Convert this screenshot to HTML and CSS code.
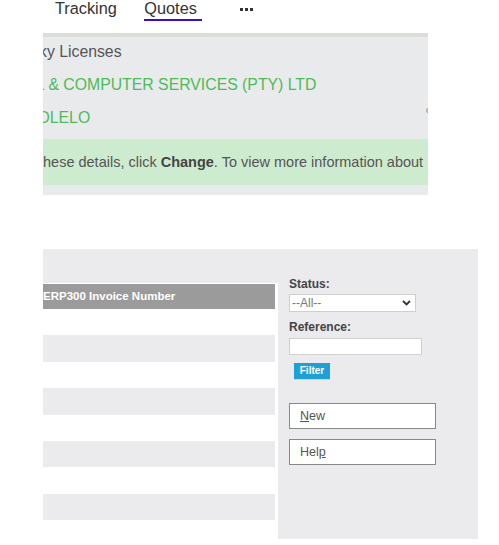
FILE: index.html
```html
<!DOCTYPE html>
<html lang="en">
<head>
<meta charset="utf-8">
<title>Quotes</title>
<link rel="stylesheet" href="styles.css">
</head>
<body>
<nav class="tabs">
  <a class="tab" href="#">Tracking</a>
  <a class="tab tab-active" href="#">Quotes</a>
  <span class="tab-more" aria-label="More"><i></i><i></i><i></i></span>
</nav>

<section class="account">
  <div class="acc-line acc-name"><span class="shift-k">ky Licenses</span></div>
  <div class="acc-line acc-green"><span class="shift-l">L &amp; COMPUTER SERVICES (PTY) LTD</span></div>
  <div class="acc-line acc-green acc-last">
    <span class="shift-o">OLELO</span>
    <span class="acc-edge">co</span>
  </div>
  <div class="acc-note">hese details, click <b>Change</b>. To view more information about</div>
</section>

<section class="orders">
  <div class="orders-list">
    <div class="list-head">ERP300 Invoice Number</div>
    <div class="list-row"></div>
    <div class="list-row alt"></div>
    <div class="list-row"></div>
    <div class="list-row alt"></div>
    <div class="list-row"></div>
    <div class="list-row alt"></div>
    <div class="list-row"></div>
    <div class="list-row alt"></div>
  </div>
  <div class="orders-filter">
    <label class="f-label">Status:</label>
    <div class="f-select"><span>--All--</span>
      <svg width="9" height="6" viewBox="0 0 9 6"><polyline points="1,1 4.5,4.5 8,1" fill="none" stroke="#333" stroke-width="1.8"/></svg>
    </div>
    <label class="f-label f-label-ref">Reference:</label>
    <div class="f-input"></div>
    <button class="f-filter" type="button">Filter</button>
    <button class="f-action f-new" type="button"><u>N</u>ew</button>
    <button class="f-action f-help" type="button">Hel<u>p</u></button>
  </div>
</section>
</body>
</html>
```

FILE: styles.css
```css
body {
  margin: 0;
  font-family: "Liberation Sans", Arial, sans-serif;
  background: #fff;
}

/* top tabs */
.tabs {
  display: flex;
  align-items: flex-start;
  height: 33px;
  padding-left: 55px;
  box-sizing: border-box;
}
.tab {
  font-size: 16.3px;
  line-height: 17px;
  color: #333;
  text-decoration: none;
}
.tab-active {
  margin-left: 27.5px;
  padding-right: 5px;
  padding-bottom: 2px;
  border-bottom: 2px solid #3d0ccb;
}
.tab-more {
  display: flex;
  gap: 2px;
  margin-left: 38px;
  margin-top: 7.5px;
}
.tab-more i {
  width: 3px;
  height: 3px;
  background: #333;
}

/* account panel */
.account {
  margin-left: 43px;
  width: 385px;
  height: 162px;
  box-sizing: border-box;
  border-top: 4px solid #dcdcda;
  background: #e9eaec;
  overflow: hidden;
  padding-top: 4.5px;
  display: flex;
  flex-direction: column;
}
.acc-line {
  font-size: 15.8px;
  line-height: 20px;
  color: #555;
  white-space: nowrap;
  margin-bottom: 13px;
}
.acc-green { color: #4dbb58; }
.acc-last {
  display: flex;
  justify-content: space-between;
  margin-bottom: 11.5px;
}
.shift-k { margin-left: -4px; }
.shift-l { margin-left: -7.2px; }
.shift-o { margin-left: -5.5px; }
.acc-edge {
  font-size: 9px;
  line-height: 9px;
  color: #777;
  margin-top: -2px;
  margin-right: -7.5px;
}
.acc-note {
  height: 46px;
  background: #cdebcf;
  font-size: 14.5px;
  line-height: 46px;
  color: #555;
  white-space: nowrap;
}
.acc-note b { color: #444; }

/* orders panel */
.orders {
  margin-top: 54px;
  margin-left: 43px;
  width: 435px;
  height: 290px;
  background: #ebebed;
  display: flex;
}
.orders-list {
  width: 235px;
  margin-top: 34px;
  padding-top: 1px;
  background: #fff;
  box-sizing: border-box;
}
.list-head {
  width: 232px;
  height: 25px;
  background: #9b9b9b;
  color: #fff;
  font-weight: bold;
  font-size: 11.5px;
  line-height: 25px;
  white-space: nowrap;
  overflow: hidden;
}
.list-row {
  width: 232px;
  height: 26.4px;
}
.list-row.alt { background: #ebebed; }

.orders-filter {
  width: 200px;
  box-sizing: border-box;
  padding: 28.4px 0 0 11px;
  display: flex;
  flex-direction: column;
  align-items: flex-start;
}
.f-label {
  font-size: 12px;
  font-weight: bold;
  line-height: 14px;
  color: #444;
}
.f-label-ref { margin-top: 7.8px; }
.f-select {
  margin-top: 2.6px;
  width: 127px;
  height: 18px;
  box-sizing: border-box;
  border: 1px solid #cfcfcf;
  background: #fff;
  display: flex;
  align-items: center;
  justify-content: space-between;
  padding: 0 4px 0 2px;
  font-size: 12px;
  color: #777;
}
.f-input {
  margin-top: 4px;
  width: 133px;
  height: 17px;
  box-sizing: border-box;
  border: 1px solid #cfcfcf;
  background: #fff;
}
.f-filter {
  margin: 8.2px 0 0 5px;
  width: 36px;
  height: 17px;
  padding: 0;
  border: 0;
  border-bottom: 1px solid #c9d6dc;
  background: #1ea0d7;
  color: #fff;
  font-family: "Liberation Sans", Arial, sans-serif;
  font-weight: bold;
  font-size: 10px;
  line-height: 16px;
  text-align: center;
}
.f-action {
  width: 147px;
  height: 26px;
  box-sizing: border-box;
  border: 1px solid #888;
  background: #fff;
  padding: 0 0 0 10px;
  text-align: left;
  font-family: "Liberation Sans", Arial, sans-serif;
  font-size: 12.5px;
  line-height: 24px;
  color: #555;
}
.f-new { margin-top: 23px; }
.f-help { margin-top: 10px; }
```
